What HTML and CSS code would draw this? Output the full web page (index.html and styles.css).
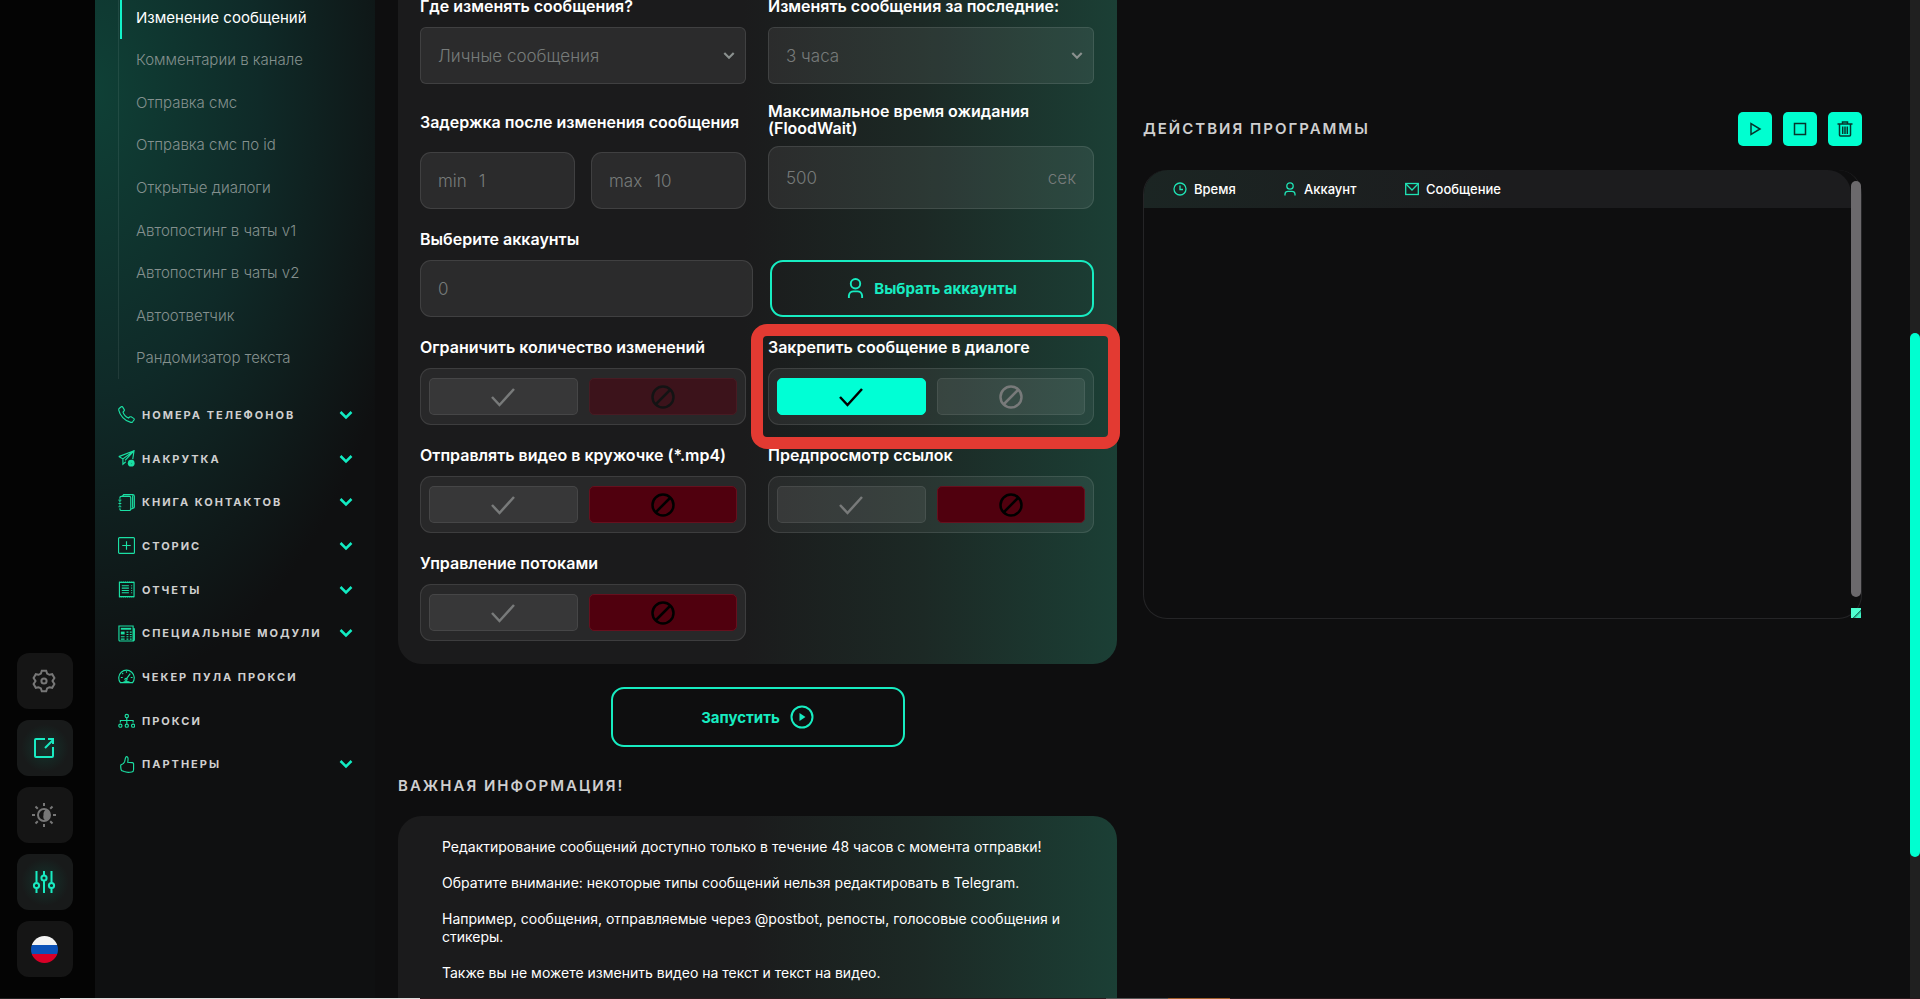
FILE: index.html
```html
<!DOCTYPE html>
<html lang="ru">
<head>
  <meta charset="UTF-8">
  <title>Изменение сообщений</title>
  <link rel="stylesheet" href="styles.css">
</head>
<body>
<svg class="sprite" aria-hidden="true">
  <symbol id="check" viewBox="0 0 24 24"><path d="M1 12l7.500 8L23 4"/></symbol>
  <symbol id="ban" viewBox="0 0 24 24"><circle cx="12" cy="12" r="10.500"/><path d="M19.500 4.500l-15 15"/></symbol>
  <symbol id="chev" viewBox="0 0 14 10"><path d="M1.500 2l5.500 5.500L12.500 2"/></symbol>
  <symbol id="user" viewBox="0 0 18 22"><circle cx="9" cy="6" r="5"/><path d="M2 21v-2.500a5 5 0 0 1 5-4.500h4a5 5 0 0 1 5 4.500V21"/></symbol>
</svg>

<div class="rail">
  <button class="rail-btn" aria-label="Настройки"><svg viewBox="0 0 24 24"><path d="M9.800 1.800h4.400l.9 2.700 2.300 1.300 2.800-.6 2.200 3.800-1.900 3 1.900 3-2.200 3.800-2.800-.6-2.300 1.300-.9 2.700H9.800l-.9-2.700-2.300-1.300-2.800.6L1.600 15l1.900-3-1.900-3 2.200-3.800 2.800.6 2.300-1.300z"/><circle cx="12" cy="12" r="2.600"/></svg></button>
  <button class="rail-btn glow" aria-label="Открыть в окне"><svg viewBox="0 0 24 24"><path d="M13 3H4a1 1 0 0 0-1 1v16a1 1 0 0 0 1 1h16a1 1 0 0 0 1-1v-9M13 12l8-8M16 3h5v5"/></svg></button>
  <button class="rail-btn" aria-label="Тема"><svg viewBox="0 0 24 24"><circle cx="12" cy="12" r="6"/><path d="M12 0v3M12 21v3M0 12h3M21 12h3M3.500 3.500l2.300 2.300M18.200 18.200l2.300 2.300M3.500 20.500l2.300-2.300M18.200 5.800l2.300-2.300"/><path class="solid" d="M14 6.500a6 6 0 0 1 0 11.300 5 5 0 0 1-2.500-5.800 6 6 0 0 1 2.500-5.500z"/></svg></button>
  <button class="rail-btn glow" aria-label="Фильтры"><svg viewBox="0 0 24 24"><path d="M4.500 1v11.500M4.500 18v5M12 1v4M12 10.500V23M19.500 1v11.500M19.500 18v5"/><circle cx="4.500" cy="15.500" r="2.600"/><circle cx="12" cy="8" r="2.600"/><circle cx="19.500" cy="15.500" r="2.600"/></svg></button>
  <button class="rail-btn" aria-label="Русский"><span class="flag"></span></button>
</div>

<nav class="sidebar">
  <div class="submenu">
    <a class="active" href="#">Изменение сообщений</a>
    <a href="#">Комментарии в канале</a>
    <a href="#">Отправка смс</a>
    <a href="#">Отправка смс по id</a>
    <a href="#">Открытые диалоги</a>
    <a href="#">Автопостинг в чаты v1</a>
    <a href="#">Автопостинг в чаты v2</a>
    <a href="#">Автоответчик</a>
    <a href="#">Рандомизатор текста</a>
  </div>
  <div class="menu">
    <a href="#"><svg viewBox="0 0 18 18"><path d="M1.200 2.600L3.400.8c.6-.4 1.200-.2 1.600.4l1.600 2.600c.4.7.1 1.200-.4 1.700l-.9.9c.8 2.600 3.300 5.200 5.800 6.300l1.200-1c.5-.4 1-.5 1.600-.2l2.700 1.600c.7.400.8 1 .4 1.600l-1.500 2c-.5.600-1.200.800-2 .600C7 15.800 1.800 9.600.8 4.300c-.1-.7 0-1.300.4-1.700z"/></svg><span>НОМЕРА ТЕЛЕФОНОВ</span><svg class="chev"><use href="#chev"/></svg></a>
    <a href="#"><svg viewBox="0 0 18 18"><path d="M.8 7L17 .8l-1.400 9M.8 7l4.400 2.400L17 .8 7.500 11M5.200 9.400V15l3-2.500"/><circle class="solid" cx="14" cy="14" r="3.600"/><circle class="hole" cx="14" cy="14" r="1"/></svg><span>НАКРУТКА</span><svg class="chev"><use href="#chev"/></svg></a>
    <a href="#"><svg viewBox="0 0 18 18"><path d="M2 5V4a1.500 1.500 0 0 1 1.500-1.500H12A1.500 1.500 0 0 1 13.500 4v12a1.500 1.500 0 0 1-1.500 1.500H3.500A1.500 1.500 0 0 1 2 16v-1M4.500 2.500L6 .6h9.500A1.800 1.800 0 0 1 17.300 2.400v11.200a1.500 1.500 0 0 1-1.300 1.500l-2.500 1M15.500 1.500v13M.5 6.500h3M.5 10h3M.5 13.500h3M2 7.500v1.500M2 11v1.500"/></svg><span>КНИГА КОНТАКТОВ</span><svg class="chev"><use href="#chev"/></svg></a>
    <a href="#"><svg viewBox="0 0 18 18"><rect x=".6" y=".6" width="16.800" height="16.800" rx="1"/><path d="M9 4.500v9M4.500 9h9"/></svg><span>СТОРИС</span><svg class="chev"><use href="#chev"/></svg></a>
    <a href="#"><svg viewBox="0 0 18 18"><path d="M1.500 1.500v15h15.500v-15z"/><path class="dash" d="M1.500 1h16M1.500 17h16"/><path d="M4 5h7.500M4 7.500h7.500M4 10h7.500M4 12.500h7.500M14 5h1M14 7.500h1M14 10h1M14 12.500h1"/></svg><span>ОТЧЕТЫ</span><svg class="chev"><use href="#chev"/></svg></a>
    <a href="#"><svg viewBox="0 0 18 18"><path d="M1 1h15v16H2a1 1 0 0 1-1-1zM16 4h1.300v12l-1 1"/><rect class="solid" x="3" y="3" width="11" height="2"/><rect class="solid" x="3" y="7" width="4" height="3"/><path d="M9 7.500h2M12.500 7.500h2M9 10h2M12.500 10h2M3 12.500h4M9 12.500h2M12.500 12.500h2M3 15h4M9 15h2M12.500 15h2"/></svg><span>СПЕЦИАЛЬНЫЕ МОДУЛИ</span><svg class="chev"><use href="#chev"/></svg></a>
    <a href="#"><svg viewBox="0 0 18 18"><path d="M2.500 15.500A8.200 8.200 0 1 1 15.500 15.500zM5 15.500a5 3 0 0 1 8 0M8.500 12l4.500-6M9 3.500v1.500M4.500 5.500l1 1M3 10h2M13.500 10h2"/><circle cx="8.500" cy="12" r="1.200"/></svg><span>ЧЕКЕР ПУЛА ПРОКСИ</span></a>
    <a href="#"><svg viewBox="0 0 18 18"><circle cx="9.300" cy="4.300" r="1.800"/><circle cx="2.500" cy="14.500" r="1.700"/><circle cx="9.300" cy="14.500" r="1.700"/><circle cx="16" cy="14.500" r="1.700"/><path d="M9.300 6v6.500M2.500 11V9h13.500v2"/></svg><span>ПРОКСИ</span></a>
    <a href="#"><svg viewBox="0 0 18 18"><path d="M3 9.500c1-.7 3-.8 4-3.500.6-2 .7-5.400 2-5.400 1.700 0 2 1.700 1.300 6l4.700.4c1.300.2 1.700 1 1.500 2.300v5c0 1.500-.7 2.500-2 2.700-2.600.4-5.700.5-8-.5-1-.6-2-.6-2.800-1.200-.8-1-.9-5-.7-5.800z"/></svg><span>ПАРТНЕРЫ</span><svg class="chev"><use href="#chev"/></svg></a>
  </div>
</nav>

<main>
  <div class="col">
    <form class="card settings">
      <div class="field">
        <label for="where">Где изменять сообщения?</label>
        <div class="select">
          <select id="where"><option>Личные сообщения</option></select>
          <svg class="chev" viewBox="0 0 14 10"><use href="#chev"/></svg>
        </div>
      </div>
      <div class="field">
        <label for="period">Изменять сообщения за последние:</label>
        <div class="select">
          <select id="period"><option>3 часа</option></select>
          <svg class="chev" viewBox="0 0 14 10"><use href="#chev"/></svg>
        </div>
      </div>

      <div class="field delay">
        <label for="min">Задержка после изменения сообщения</label>
        <div class="pair">
          <div class="box"><label for="min">min</label><input id="min" type="text" placeholder="1"></div>
          <div class="box"><label for="max">max</label><input id="max" type="text" placeholder="10"></div>
        </div>
      </div>
      <div class="field wait">
        <label for="wait">Максимальное время ожидания (FloodWait)</label>
        <div class="box"><input id="wait" type="text" placeholder="500"><span>сек</span></div>
      </div>

      <div class="field wide accounts">
        <label for="accs">Выберите аккаунты</label>
        <div class="accounts-row">
          <div class="box"><input id="accs" type="text" placeholder="0"></div>
          <button type="button" class="outline-btn"><svg class="user"><use href="#user"/></svg>Выбрать аккаунты</button>
        </div>
      </div>

      <div class="field">
        <span class="title">Ограничить количество изменений</span>
        <div class="toggle">
          <label class="yes"><input type="radio" name="limit" aria-label="Да"><svg><use href="#check"/></svg></label>
          <label class="no faded"><input type="radio" name="limit" aria-label="Нет" checked><svg><use href="#ban"/></svg></label>
        </div>
      </div>
      <div class="field marked">
        <span class="title">Закрепить сообщение в диалоге</span>
        <div class="toggle">
          <label class="yes"><input type="radio" name="pin" aria-label="Да" checked><svg><use href="#check"/></svg></label>
          <label class="no"><input type="radio" name="pin" aria-label="Нет"><svg><use href="#ban"/></svg></label>
        </div>
      </div>

      <div class="field">
        <span class="title">Отправлять видео в кружочке (*.mp4)</span>
        <div class="toggle">
          <label class="yes"><input type="radio" name="round" aria-label="Да"><svg><use href="#check"/></svg></label>
          <label class="no"><input type="radio" name="round" aria-label="Нет" checked><svg><use href="#ban"/></svg></label>
        </div>
      </div>
      <div class="field">
        <span class="title">Предпросмотр ссылок</span>
        <div class="toggle">
          <label class="yes"><input type="radio" name="preview" aria-label="Да"><svg><use href="#check"/></svg></label>
          <label class="no"><input type="radio" name="preview" aria-label="Нет" checked><svg><use href="#ban"/></svg></label>
        </div>
      </div>

      <div class="field">
        <span class="title">Управление потоками</span>
        <div class="toggle">
          <label class="yes"><input type="radio" name="threads" aria-label="Да"><svg><use href="#check"/></svg></label>
          <label class="no"><input type="radio" name="threads" aria-label="Нет" checked><svg><use href="#ban"/></svg></label>
        </div>
      </div>
    </form>

    <button class="outline-btn start">Запустить<svg viewBox="0 0 24 24"><circle cx="12" cy="12" r="10.500"/><path class="solid" d="M9.500 8l6 4-6 4z"/></svg></button>

    <h2>ВАЖНАЯ ИНФОРМАЦИЯ!</h2>
    <div class="card info">
      <p>Редактирование сообщений доступно только в течение 48 часов с момента отправки!</p>
      <p>Обратите внимание: некоторые типы сообщений нельзя редактировать в Telegram.</p>
      <p>Например, сообщения, отправляемые через @postbot, репосты, голосовые сообщения и стикеры.</p>
      <p>Также вы не можете изменить видео на текст и текст на видео.</p>
    </div>
  </div>

  <div class="col log-col">
    <div class="log-head">
      <h2>ДЕЙСТВИЯ ПРОГРАММЫ</h2>
      <div class="log-btns">
        <button aria-label="Старт"><svg viewBox="0 0 16 16"><path d="M4 2.500v11l9-5.500z"/></svg></button>
        <button aria-label="Стоп"><svg viewBox="0 0 16 16"><rect x="2.500" y="2.500" width="11" height="11"/></svg></button>
        <button aria-label="Очистить"><svg viewBox="0 0 16 16"><path d="M.5 3h15M5.500 3V1h5v2M2.500 3.500V14a1 1 0 0 0 1 1h9a1 1 0 0 0 1-1V3.500M5.700 5.500v7.500M8 5.500v7.500M10.300 5.500v7.500"/></svg></button>
      </div>
    </div>
    <div class="log">
      <table>
        <thead>
          <tr>
            <th><div><svg viewBox="0 0 14 14"><circle cx="7" cy="7" r="6"/><path d="M7 3.500V7.500h3"/></svg>Время</div></th>
            <th><div><svg viewBox="0 0 14 14"><circle cx="7" cy="4" r="3.200"/><path d="M2 13.500V12a3 3 0 0 1 3-2.700h4a3 3 0 0 1 3 2.700v1.500"/></svg>Аккаунт</div></th>
            <th><div><svg viewBox="0 0 14 14"><rect x=".7" y="1.500" width="12.600" height="11"/><path d="M1 2l6 6 6-6"/></svg>Сообщение</div></th>
          </tr>
        </thead>
      </table>
      <div class="log-scroll"><div class="thumb"></div><div class="corner"></div></div>
    </div>
  </div>
</main>

<div class="page-scroll"><div class="thumb"></div></div>
<div class="progress"></div>
</body>
</html>
```

FILE: styles.css
```css
* {
  box-sizing: border-box;
  margin: 0;
  padding: 0;
}

body {
  display: grid;
  grid-template-columns: 95px 280px 1fr 10px;
  height: 100vh;
  overflow: hidden;
  background: #0e0e0f;
  color: #fff;
  font-family: Inter, "Open Sans", sans-serif;
  font-size: 14px;
}

svg {
  fill: none;
  stroke: currentColor;
  stroke-width: 2;
  flex: none;
}

svg .solid {
  fill: currentColor;
  stroke: none;
}

button, input, select {
  font-family: inherit;
  color: inherit;
}

button {
  cursor: pointer;
}

a {
  color: inherit;
  text-decoration: none;
}

.sprite {
  display: none;
}

/* left rail */
.rail {
  display: flex;
  flex-direction: column;
  justify-content: flex-end;
  gap: 11px;
  padding: 0 22px 22px 17px;
  background: #040404;
}

.rail-btn {
  display: flex;
  align-items: center;
  justify-content: center;
  width: 56px;
  height: 56px;
  padding-right: 2px;
  border: none;
  border-radius: 12px;
  background: #151515;
  color: #777;
}

.rail-btn svg {
  width: 24px;
  height: 24px;
}

.rail-btn.glow {
  color: #19ebc2;
  background: radial-gradient(circle, #14332c, #181a1a 60%);
}

.flag {
  width: 27px;
  height: 27px;
  border-radius: 50%;
  background: linear-gradient(#f3f3f3 33%, #0b52b8 33%, #0b52b8 67%, #d80027 67%);
}

/* sidebar */
.sidebar {
  overflow: hidden;
  padding: 0 22px 0 23px;
  background: radial-gradient(ellipse 330px 600px at 0 90px, #0f4036, #0f2a28 50%, #0f1011 100%);
}

.submenu {
  display: flex;
  flex-direction: column;
  height: 383px;
  margin-top: -4px;
  border-left: 1px solid rgba(255, 255, 255, 0.08);
  font-size: 15px;
  font-weight: 300;
  color: #84908e;
}

.submenu a {
  display: flex;
  flex: 1;
  align-items: center;
  padding-left: 17px;
}

.submenu .active {
  margin-left: 1px;
  padding-left: 14px;
  border-left: 2px solid #12f3c9;
  color: #fff;
  font-weight: 400;
}

.menu {
  display: flex;
  flex-direction: column;
  height: 393px;
  margin-top: 14px;
  color: #cfcfcf;
  font-size: 11px;
  font-weight: 700;
  letter-spacing: 2px;
}

.menu a {
  display: flex;
  flex: 1;
  align-items: center;
  gap: 7px;
  white-space: nowrap;
}

.menu svg {
  width: 17px;
  height: 17px;
  color: #1be0a4;
  stroke-width: 1.2;
}

.menu .hole {
  fill: #0f1a18;
}

.menu .dash {
  stroke-dasharray: 1 1;
}

.menu .chev {
  width: 14px;
  height: 10px;
  margin-left: auto;
  color: #12ebc2;
  stroke-width: 2.5;
}

/* content */
main {
  display: grid;
  grid-template-columns: 1fr 1fr;
  gap: 26px;
  padding: 0 48px 0 23px;
  min-width: 0;
  overflow: hidden;
}

.col {
  display: flex;
  flex-direction: column;
  min-width: 0;
}

.card {
  border-radius: 24px;
  background: linear-gradient(90deg, #1b1b1c 48%, #1c2925 73%, #1b3f35 100%);
}

/* top of the form is scrolled out of view */
.settings {
  display: grid;
  grid-template-columns: 1fr 1fr;
  gap: 19px 22px;
  align-items: end;
  margin-top: -27px;
  padding: 22px 23px 23px 22px;
}

.field {
  min-width: 0;
}

.field.wide {
  grid-column: 1 / 3;
}

.field > label,
.field > .title {
  display: block;
  padding: 3px 0 12px;
  font-size: 16px;
  font-weight: 600;
  line-height: 17px;
}

.delay > label {
  padding-bottom: 21px;
}

.wait > label {
  padding: 0 0 9px;
}

.box,
.select {
  display: flex;
  align-items: center;
  gap: 12px;
  height: 57px;
  padding: 0 17px;
  border: 1px solid rgba(255, 255, 255, 0.1);
  border-radius: 11px;
  background: rgba(255, 255, 255, 0.07);
  color: #777b7a;
  font-size: 17px;
  font-weight: 300;
}

.select {
  border-radius: 6px;
  padding-right: 10px;
}

.select select,
.box input {
  flex: 1;
  width: 0;
  border: none;
  outline: none;
  background: none;
  font-size: 17px;
  font-weight: 300;
  appearance: none;
}

.select .chev {
  width: 12px;
  height: 9px;
  color: #8a908e;
  stroke-width: 2.5;
}

.box input::placeholder {
  color: #777b7a;
}

.wait .box {
  height: 63px;
}

.pair {
  display: grid;
  grid-template-columns: 1fr 1fr;
  gap: 16px;
}

.accounts-row {
  display: grid;
  grid-template-columns: 333fr 324fr;
  gap: 17px;
}

.outline-btn {
  display: flex;
  align-items: center;
  justify-content: center;
  gap: 10px;
  border: 2px solid #17ecc1;
  border-radius: 13px;
  background: none;
  color: #17ecc1;
  font-size: 15px;
  font-weight: 700;
}

.outline-btn svg {
  width: 24px;
  height: 24px;
}

.outline-btn .user {
  width: 17px;
  height: 21px;
}

.toggle {
  display: grid;
  grid-template-columns: 1fr 1fr;
  gap: 11px;
  height: 57px;
  padding: 9px 8px;
  border: 1px solid rgba(255, 255, 255, 0.1);
  border-radius: 11px;
  background: rgba(255, 255, 255, 0.06);
}

.toggle label {
  display: flex;
  align-items: center;
  justify-content: center;
  border: 1px solid rgba(255, 255, 255, 0.08);
  border-radius: 5px;
  background: rgba(255, 255, 255, 0.07);
  color: #787a7a;
  cursor: pointer;
}

.toggle input {
  appearance: none;
}

.toggle svg {
  width: 24px;
  height: 24px;
  stroke-width: 2.5;
}

.toggle .yes:has(:checked) {
  background: #00ffd5;
  border-color: #00ffd5;
  color: #000;
}

.toggle .no:has(:checked) {
  background: #50000e;
  border-color: #66101e;
  color: #000;
}

.toggle .no.faded {
  opacity: 0.5;
}

/* red frame around the pin option */
.marked {
  position: relative;
}

.marked::after {
  content: "";
  position: absolute;
  inset: -12px -26px -24px -17px;
  border: 12px solid #e33a32;
  border-radius: 16px;
  pointer-events: none;
}

.start {
  align-self: center;
  width: 294px;
  height: 60px;
  margin: 23px 0 29px;
}

h2 {
  color: #cfcfcf;
  font-size: 15px;
  font-weight: 600;
  line-height: 20px;
  letter-spacing: 2px;
}

.info {
  flex: 1 0 auto;
  margin-top: 20px;
  padding: 22px 44px;
  line-height: 18px;
}

.info p {
  margin-bottom: 18px;
}

/* action log */
.log-head {
  display: flex;
  align-items: center;
  justify-content: space-between;
  margin-top: 112px;
}

.log-btns {
  display: flex;
  gap: 11px;
}

.log-btns button {
  display: flex;
  align-items: center;
  justify-content: center;
  width: 34px;
  height: 34px;
  border: none;
  border-radius: 5px;
  background: #00ffd0;
  color: #06352c;
}

.log-btns svg {
  width: 16px;
  height: 16px;
  stroke-width: 1.5;
}

.log {
  display: flex;
  height: 449px;
  margin-top: 24px;
  border: 1px solid #252527;
  border-top: none;
  border-radius: 24px;
}

.log table {
  flex: 1;
  align-self: flex-start;
  border-collapse: collapse;
  border-radius: 24px 24px 0 0;
  background: linear-gradient(90deg, #1b2523, #1c1c1e 50%);
}

.log th {
  height: 38px;
  font-size: 13px;
  font-weight: 500;
}

.log th:nth-child(1) {
  width: 139px;
  padding-left: 29px;
}

.log th:nth-child(2) {
  width: 122px;
}

.log th div {
  display: flex;
  align-items: center;
  gap: 7px;
}

.log th svg {
  width: 14px;
  height: 14px;
  color: #1fe3b5;
  stroke-width: 1.3;
}

.log-scroll {
  display: flex;
  flex-direction: column;
  justify-content: space-between;
  width: 10px;
  padding-top: 11px;
}

.log-scroll .thumb {
  height: 416px;
  border-radius: 5px;
  background: #6b696c;
}

.log-scroll .corner {
  height: 10px;
  background: linear-gradient(135deg, #4fffd0 55%, #10634f 56%, #3ef0c2 75%);
}

/* page scrollbar */
.page-scroll {
  background: #202020;
  padding-top: 333px;
}

.page-scroll .thumb {
  height: 524px;
  border-radius: 5px;
  background: #00ffd0;
}

.progress {
  position: fixed;
  left: 0;
  right: 0;
  bottom: 0;
  height: 1px;
  background: linear-gradient(90deg, #222 60px, #ddd 60px, #ddd 420px, #2a1a1d 420px, #2a1a1d 1106px, #555 1106px, #555 1168px, #a0602c 1168px, #a0602c 1230px, #2a1a1d 1230px);
}
```
